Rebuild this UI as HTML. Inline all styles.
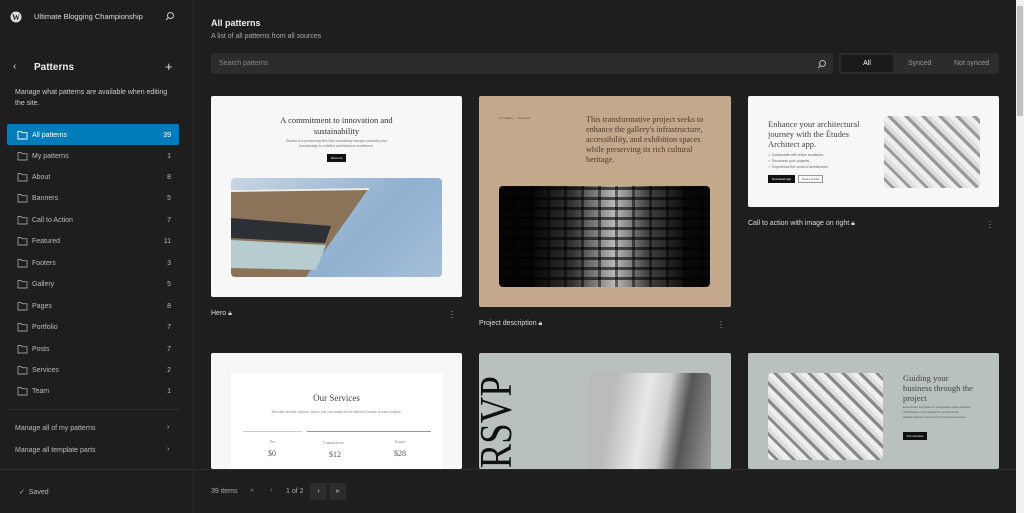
<!DOCTYPE html>
<html><head><meta charset="utf-8"><style>
*{box-sizing:border-box;margin:0;padding:0}
body{width:1024px;height:513px;overflow:hidden;background:#1e1e1e;font-family:"Liberation Sans",sans-serif;color:#e0e0e0;position:relative}
.abs{position:absolute}
.side{left:0;top:0;width:192px;height:513px;background:#1e1e1e}
.item{position:absolute;left:7px;width:172px;height:21px;font-size:7px;color:#bbb;display:flex;align-items:center;padding-left:25px;padding-top:2px}
.item .n{position:absolute;right:8px}
.item svg{position:absolute;left:10px;top:6px}
.main{left:193px;top:0;width:823px;height:513px;background:#1e1e1e;border-left:1px solid #2c2c2c}
.card{position:absolute;border-radius:2px;overflow:hidden}
.serif{font-family:"Liberation Serif",serif}
.lbl{position:absolute;font-size:7px;color:#ddd}
.dots{position:absolute;font-size:9px;color:#aaa;line-height:3px;width:4px;text-align:center}
</style></head><body>
<div class="abs side">
 <svg class="abs" style="left:10px;top:11px" width="12" height="12" viewBox="0 0 12 12"><circle cx="6" cy="6" r="5.5" fill="#ddd"/><text x="6" y="9" font-size="8" text-anchor="middle" fill="#1e1e1e" font-family="Liberation Serif" font-weight="bold">W</text></svg>
 <div class="abs" style="left:34px;top:12px;font-size:7.5px;color:#ddd">Ultimate Blogging Championship</div>
 <svg class="abs" style="left:165px;top:11px" width="10" height="10" viewBox="0 0 10 10"><circle cx="5.5" cy="4.5" r="3" stroke="#ccc" fill="none"/><path d="M3.5 6.5L1 9" stroke="#ccc"/></svg>
 <div class="abs" style="left:13px;top:61px;font-size:10px;color:#ddd">‹</div>
 <div class="abs" style="left:34px;top:62px;font-size:10px;font-weight:bold;color:#eee">Patterns</div>
 <div class="abs" style="left:165px;top:59px;font-size:13px;color:#ddd">+</div>
 <div class="abs" style="left:15px;top:87px;width:160px;font-size:7px;line-height:11px;color:#ccc">Manage what patterns are available when editing the site.</div>
 <div class="item" style="top:124px;background:#007cba;color:#fff;border-radius:2px">All patterns<span class="n">39</span><svg width="11" height="10" viewBox="0 0 11 10"><path d="M1 1.5h3l1 1.2h5v6.3H1z" fill="none" stroke="#fff" stroke-width=".9"/></svg></div>
 <div class="item" style="top:145px">My patterns<span class="n">1</span><svg width="11" height="10" viewBox="0 0 11 10"><path d="M1 1.5h3l1 1.2h5v6.3H1z" fill="none" stroke="#999" stroke-width=".9"/></svg></div>
 <div class="item" style="top:166px">About<span class="n">8</span><svg width="11" height="10" viewBox="0 0 11 10"><path d="M1 1.5h3l1 1.2h5v6.3H1z" fill="none" stroke="#999" stroke-width=".9"/></svg></div>
 <div class="item" style="top:187px">Banners<span class="n">5</span><svg width="11" height="10" viewBox="0 0 11 10"><path d="M1 1.5h3l1 1.2h5v6.3H1z" fill="none" stroke="#999" stroke-width=".9"/></svg></div>
 <div class="item" style="top:209px">Call to Action<span class="n">7</span><svg width="11" height="10" viewBox="0 0 11 10"><path d="M1 1.5h3l1 1.2h5v6.3H1z" fill="none" stroke="#999" stroke-width=".9"/></svg></div>
 <div class="item" style="top:230px">Featured<span class="n">11</span><svg width="11" height="10" viewBox="0 0 11 10"><path d="M1 1.5h3l1 1.2h5v6.3H1z" fill="none" stroke="#999" stroke-width=".9"/></svg></div>
 <div class="item" style="top:252px">Footers<span class="n">3</span><svg width="11" height="10" viewBox="0 0 11 10"><path d="M1 1.5h3l1 1.2h5v6.3H1z" fill="none" stroke="#999" stroke-width=".9"/></svg></div>
 <div class="item" style="top:273px">Gallery<span class="n">5</span><svg width="11" height="10" viewBox="0 0 11 10"><path d="M1 1.5h3l1 1.2h5v6.3H1z" fill="none" stroke="#999" stroke-width=".9"/></svg></div>
 <div class="item" style="top:295px">Pages<span class="n">8</span><svg width="11" height="10" viewBox="0 0 11 10"><path d="M1 1.5h3l1 1.2h5v6.3H1z" fill="none" stroke="#999" stroke-width=".9"/></svg></div>
 <div class="item" style="top:316px">Portfolio<span class="n">7</span><svg width="11" height="10" viewBox="0 0 11 10"><path d="M1 1.5h3l1 1.2h5v6.3H1z" fill="none" stroke="#999" stroke-width=".9"/></svg></div>
 <div class="item" style="top:338px">Posts<span class="n">7</span><svg width="11" height="10" viewBox="0 0 11 10"><path d="M1 1.5h3l1 1.2h5v6.3H1z" fill="none" stroke="#999" stroke-width=".9"/></svg></div>
 <div class="item" style="top:359px">Services<span class="n">2</span><svg width="11" height="10" viewBox="0 0 11 10"><path d="M1 1.5h3l1 1.2h5v6.3H1z" fill="none" stroke="#999" stroke-width=".9"/></svg></div>
 <div class="item" style="top:380px">Team<span class="n">1</span><svg width="11" height="10" viewBox="0 0 11 10"><path d="M1 1.5h3l1 1.2h5v6.3H1z" fill="none" stroke="#999" stroke-width=".9"/></svg></div>
 <div class="abs" style="left:7px;top:409px;width:172px;height:1px;background:#2f2f2f"></div>
 <div class="abs" style="left:15px;top:425px;font-size:7px;color:#bbb">Manage all of my patterns</div>
 <div class="abs" style="left:167px;top:424px;font-size:7px;color:#bbb">›</div>
 <div class="abs" style="left:15px;top:447px;font-size:7px;color:#bbb">Manage all template parts</div>
 <div class="abs" style="left:167px;top:446px;font-size:7px;color:#bbb">›</div>
 <div class="abs" style="left:0;top:469px;width:192px;height:1px;background:#2c2c2c"></div>
 <div class="abs" style="left:19px;top:488px;font-size:7px;color:#bbb">✓&nbsp; Saved</div>
</div>
<div class="abs main">
 <div class="abs" style="left:17px;top:18px;font-size:9px;font-weight:bold;color:#eee">All patterns</div>
 <div class="abs" style="left:17px;top:33px;font-size:7px;color:#aaa">A list of all patterns from all sources</div>
 <div class="abs" style="left:17px;top:53px;width:622px;height:21px;background:#2c2c2c;border-radius:2px"></div>
 <div class="abs" style="left:25px;top:60px;font-size:7px;color:#888">Search patterns</div>
 <svg class="abs" style="left:623px;top:59px" width="10" height="10" viewBox="0 0 10 10"><circle cx="5.5" cy="4.5" r="3" stroke="#bbb" fill="none"/><path d="M3.5 6.5L1 9" stroke="#bbb"/></svg>
 <div class="abs" style="left:645px;top:53px;width:160px;height:21px;background:#2c2c2c;border-radius:2px"></div>
 <div class="abs" style="left:647px;top:55px;width:52px;height:17px;background:#1a1a1a;border-radius:2px;font-size:7px;color:#fff;text-align:center;line-height:17px">All</div>
 <div class="abs" style="left:714px;top:60px;font-size:7px;color:#999">Synced</div>
 <div class="abs" style="left:760px;top:60px;font-size:7px;color:#999">Not synced</div>

 <!-- card1 -->
 <div class="card" style="left:17px;top:96px;width:251px;height:201px;background:#f7f7f7">
  <div class="serif abs" style="left:0;width:251px;top:19px;text-align:center;font-size:8.5px;line-height:11px;color:#333">A commitment to innovation and<br>sustainability</div>
  <div class="abs" style="left:0;width:251px;top:43px;text-align:center;font-size:3.5px;line-height:5px;color:#777">Études is a pioneering firm that seamlessly merges creativity and<br>functionality to redefine architectural excellence.</div>
  <div class="abs" style="left:116px;top:58px;width:19px;height:8px;background:#111;font-size:3px;color:#fff;text-align:center;line-height:8px">About us</div>
  <div class="abs" style="left:20px;top:82px;width:211px;height:99px;border-radius:4px;background:linear-gradient(135deg,#c9d6e3,#8fb0cf 60%,#a5bfd9);overflow:hidden">
   <svg width="211" height="99" viewBox="0 0 211 99"><polygon points="0,12 138,10 75,99 0,99" fill="#8a7358"/><polygon points="0,40 100,48 94,65 0,60" fill="#2c2f33"/><polygon points="0,62 95,67 85,92 0,90" fill="#b6cccf"/><line x1="0" y1="13" x2="138" y2="11" stroke="#eee" stroke-width="2"/></svg>
  </div>
 </div>
 <div class="lbl" style="left:17px;top:310px">Hero 🔒︎</div>
 <div class="dots" style="left:256px;top:310px">·<br>·<br>·</div>

 <!-- card2 -->
 <div class="card" style="left:285px;top:96px;width:252px;height:211px;background:#c3a88c">
  <div class="abs" style="left:20px;top:20px;font-size:3px;color:#555">Art Gallery — Overview</div>
  <div class="serif abs" style="left:107px;top:19px;width:126px;font-size:8.2px;line-height:10px;color:#4a3c30">This transformative project seeks to enhance the gallery's infrastructure, accessibility, and exhibition spaces while preserving its rich cultural heritage.</div>
  <div class="abs" style="left:20px;top:90px;width:211px;height:101px;border-radius:4px;background:linear-gradient(90deg,#050505 15%,#333 35%,#bbb 55%,#444 70%,#080808 90%);overflow:hidden">
   <div style="width:100%;height:100%;background:repeating-linear-gradient(0deg,transparent 0 7px,rgba(0,0,0,.6) 7px 10px),repeating-linear-gradient(90deg,transparent 0 14px,rgba(0,0,0,.5) 14px 17px)"></div>
  </div>
 </div>
 <div class="lbl" style="left:285px;top:320px">Project description 🔒︎</div>
 <div class="dots" style="left:525px;top:320px">·<br>·<br>·</div>

 <!-- card3 -->
 <div class="card" style="left:554px;top:96px;width:251px;height:111px;background:#f7f7f7">
  <div class="serif abs" style="left:20px;top:23px;width:104px;font-size:8.5px;line-height:10px;color:#444">Enhance your architectural journey with the Études Architect app.</div>
  <div class="abs" style="left:20px;top:56px;font-size:3.5px;line-height:6px;color:#666">✓ Collaborate with fellow architects.<br>✓ Showcase your projects.<br>✓ Experience the world of architecture.</div>
  <div class="abs" style="left:20px;top:79px;width:27px;height:8px;background:#111;font-size:3px;color:#fff;text-align:center;line-height:8px">Download app</div>
  <div class="abs" style="left:50px;top:79px;width:25px;height:8px;border:.5px solid #999;font-size:3px;color:#555;text-align:center;line-height:7px">How it works</div>
  <div class="abs" style="left:136px;top:20px;width:96px;height:72px;border-radius:4px;background:repeating-linear-gradient(45deg,#eee 0 5px,#999 5px 8px,#ddd 8px 12px),#ccc"></div>
 </div>
 <div class="lbl" style="left:554px;top:220px">Call to action with image on right 🔒︎</div>
 <div class="dots" style="left:794px;top:220px">·<br>·<br>·</div>

 <!-- row2 -->
 <div class="card" style="left:17px;top:353px;width:251px;height:116px;background:#f7f7f7">
  <div class="abs" style="left:20px;top:20px;width:211px;height:96px;background:#fff"></div>
  <div class="serif abs" style="left:0;width:251px;top:40px;text-align:center;font-size:9px;color:#444">Our Services</div>
  <div class="abs" style="left:0;width:251px;top:57px;text-align:center;font-size:3.5px;color:#888">We offer flexible options, which you can adapt to the different needs of each project.</div>
  <div class="abs" style="left:32px;top:78px;width:59px;height:1px;background:#ccc"></div>
  <div class="abs" style="left:96px;top:78px;width:124px;height:1px;background:#999"></div>
  <div class="serif abs" style="left:59px;top:86px;font-size:4px;color:#888">Pro</div>
  <div class="serif abs" style="left:112px;top:87px;font-size:4px;color:#888">Consultation</div>
  <div class="serif abs" style="left:184px;top:86px;font-size:4px;color:#888">Expert</div>
  <div class="serif abs" style="left:57px;top:96px;font-size:8px;color:#555">$0</div>
  <div class="serif abs" style="left:118px;top:97px;font-size:8px;color:#555">$12</div>
  <div class="serif abs" style="left:183px;top:96px;font-size:8px;color:#555">$28</div>
 </div>
 <div class="card" style="left:285px;top:353px;width:252px;height:116px;background:#b8c1be">
  <div class="serif abs" style="left:-48px;top:52px;font-size:46px;color:#111;transform:rotate(-90deg) scaleX(0.8);transform-origin:center;width:130px;text-align:right;line-height:40px;white-space:nowrap;padding-right:4px">RSVP</div>
  <div class="abs" style="left:110px;top:20px;width:122px;height:96px;border-radius:4px 4px 0 0;background:linear-gradient(100deg,#bbb 20%,#e8e8e8 45%,#ccc 60%,#555 75%,#999)"></div>
 </div>
 <div class="card" style="left:554px;top:353px;width:251px;height:116px;background:#b8c1be">
  <div class="abs" style="left:20px;top:20px;width:115px;height:87px;border-radius:4px;background:repeating-linear-gradient(45deg,#eee 0 5px,#888 5px 8px,#ddd 8px 12px),#ccc"></div>
  <div class="serif abs" style="left:155px;top:20px;width:72px;font-size:8.5px;line-height:10px;color:#444">Guiding your business through the project</div>
  <div class="abs" style="left:155px;top:52px;width:72px;font-size:3px;line-height:5px;color:#555">Experience the fusion of imagination and expertise with Études—the catalyst for architectural transformations that enrich the world around us.</div>
  <div class="abs" style="left:155px;top:79px;width:24px;height:8px;background:#111;font-size:3px;color:#fff;text-align:center;line-height:8px">Our services</div>
 </div>

 <div class="abs" style="left:0;top:469px;width:823px;height:44px;background:#1e1e1e;border-top:1px solid #2c2c2c"></div>
 <div class="abs" style="left:17px;top:488px;font-size:7px;color:#aaa">39 items</div>
 <div class="abs" style="left:56px;top:487px;font-size:7px;color:#888">«</div>
 <div class="abs" style="left:76px;top:487px;font-size:7px;color:#888">‹</div>
 <div class="abs" style="left:92px;top:488px;font-size:7px;color:#aaa">1 of 2</div>
 <div class="abs" style="left:116px;top:483px;width:17px;height:17px;background:#2c2c2c;font-size:7px;color:#ddd;text-align:center;line-height:17px">›</div>
 <div class="abs" style="left:135px;top:483px;width:17px;height:17px;background:#2c2c2c;font-size:7px;color:#ddd;text-align:center;line-height:17px">»</div>
</div>
<div class="abs" style="left:1016px;top:0;width:8px;height:513px;background:#f0f0f0"></div>
<div class="abs" style="left:1017px;top:6px;width:6px;height:110px;background:#c1c1c1"></div>
</body></html>
